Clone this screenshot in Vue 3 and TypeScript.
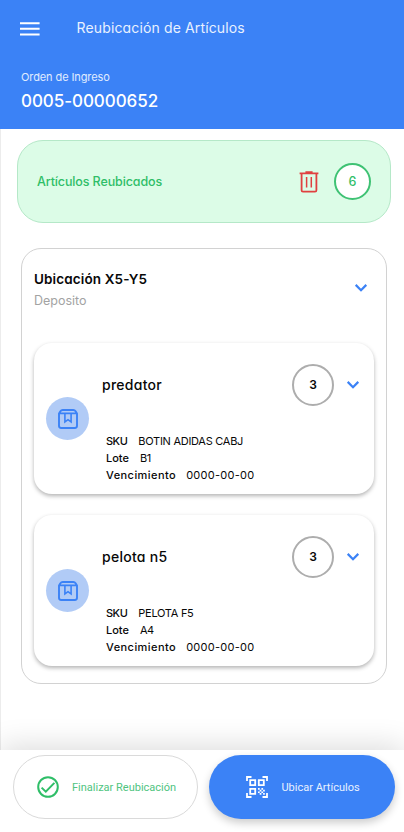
<script setup lang="ts">
interface Item {
  name: string
  qty: number
  sku: string
  lote: string
  vencimiento: string
}

const items: Item[] = [
  { name: 'predator', qty: 3, sku: 'BOTIN ADIDAS CABJ', lote: 'B1', vencimiento: '0000-00-00' },
  { name: 'pelota n5', qty: 3, sku: 'PELOTA F5', lote: 'A4', vencimiento: '0000-00-00' },
]
</script>

<template>
  <div class="screen">
    <header class="top">
      <div class="bar">
        <svg class="menu" viewBox="0 0 20 14"><path d="M0 1.2h19.6M0 6.8h19.6M0 12.4h19.6" /></svg>
        <h1 class="title">Reubicación de Artículos</h1>
      </div>
      <p class="order-label">Orden de Ingreso</p>
      <p class="order-number">0005-00000652</p>
    </header>

    <main class="content">
      <section class="moved">
        <span class="moved-label">Artículos Reubicados</span>
        <svg class="trash" viewBox="0 0 20 22">
          <path d="M.6 2.4h18.8M6.4 1.2h7.2M2.6 2.4v16.8q0 1.4 1.4 1.4h12q1.4 0 1.4-1.4V2.400" />
          <path class="thin" d="M7.600 6v10.600M12.300 6v10.600" />
        </svg>
        <span class="moved-count">6</span>
      </section>

      <section class="location">
        <div class="location-head">
          <div>
            <h2 class="location-name">Ubicación X5-Y5</h2>
            <p class="location-kind">Deposito</p>
          </div>
          <svg class="chevron" viewBox="0 0 14 10"><path d="M1.7 1.9 7 7.2l5.3-5.3" /></svg>
        </div>

        <article v-for="item in items" :key="item.name" class="card">
          <div class="badge">
            <svg viewBox="0 0 20 20">
              <path d="M1 4.400v12.400Q1 19 3.200 19h13.600q2.200 0 2.200-2.200V4.400l-1.400-2.200Q16.800 1 15.300 1H4.700Q3.200 1 2.400 2.200ZM1 4.400h18" />
              <path class="thin" d="M6.900 4.400v8.600l3.100-2.300 3.100 2.300V4.400" />
            </svg>
          </div>
          <div class="body">
            <div class="row">
              <h3 class="name">{{ item.name }}</h3>
              <span class="qty">{{ item.qty }}</span>
              <svg class="chevron" viewBox="0 0 14 10"><path d="M1.7 1.9 7 7.2l5.3-5.3" /></svg>
            </div>
            <dl class="details">
              <div class="sku"><dt>SKU</dt><dd>{{ item.sku }}</dd></div>
              <div class="lote"><dt>Lote</dt><dd>{{ item.lote }}</dd></div>
              <div class="expiry"><dt>Vencimiento</dt><dd>{{ item.vencimiento }}</dd></div>
            </dl>
          </div>
        </article>
      </section>
    </main>

    <footer class="actions">
      <button class="btn finish" type="button">
        <svg viewBox="0 0 22 22"><circle cx="11" cy="11" r="9.8" /><path d="m4.600 11.600 4.200 4.100 8.600-8.800" /></svg>
        <span>Finalizar Reubicación</span>
      </button>
      <button class="btn place" type="button">
        <svg viewBox="0 0 22 22">
          <path class="line" d="M1 5V1h4.500M16.500 1H21v4M21 17v4h-4.500M5.500 21H1v-4M4.200 4.200h5v5h-5zM12.800 4.200h5v5h-5zM4.200 12.800h5v5h-5z" />
          <path class="dots" d="M12 12h1.700v1.700H12zM15.400 12h1.700v1.700h-1.700zM13.700 13.700h1.700v1.700h-1.700zM17.100 13.700h1.700v1.700h-1.700zM12 15.400h1.700v1.700H12zM15.400 15.400h1.700v1.700h-1.700zM13.700 17.100h1.700v1.700h-1.700zM17.100 17.100h1.700v1.700h-1.700z" />
        </svg>
        <span>Ubicar Artículos</span>
      </button>
    </footer>
  </div>
</template>

<style>
body { background: #fff; }
</style>

<style scoped>
* { box-sizing: border-box; margin: 0; padding: 0; }
.screen {
  width: 404px; height: 832px; display: flex; flex-direction: column; overflow: hidden;
  background: #fff; color: #080808; box-shadow: inset 1px 0 #ececec;
  font-family: Inter, "Liberation Sans", sans-serif; font-feature-settings: "cv11";
}
svg { display: block; flex: none; fill: none; }
.top { flex: none; height: 129px; padding: 14px 21px 0; background: #3b82f6; color: #fff; }
.bar { display: flex; align-items: center; height: 28px; }
.menu { width: 20px; height: 14px; margin: 1px 36.5px 0 -1px; stroke: #fff; stroke-width: 2; }
.title { font-size: 14px; line-height: 18px; font-weight: 400; letter-spacing: .14px; color: #e8f1ff; margin-bottom: 1px; }
.order-label { margin-top: 26px; font-size: 11px; line-height: 18px; letter-spacing: -.1px; color: #e0ecff; }
.order-number { margin-top: 3px; font-size: 17px; line-height: 24px; font-weight: 500; letter-spacing: -.06px; }
.content { flex: 1; min-height: 0; padding: 11px 13px 0 17px; }
.moved {
  display: flex; align-items: center; height: 83px; padding: 0 19px;
  border: 1px solid #b5e8c8; border-radius: 26px; background: #dcfce7;
}
.moved-label { flex: 1; font-size: 12.5px; font-weight: 500; letter-spacing: -.12px; color: #2fbe68; }
.trash { width: 20px; height: 22px; margin-right: 15px; stroke: #e04040; stroke-width: 1.8; }
.trash .thin { stroke-width: 1.500; }
.moved-count {
  display: grid; place-items: center; width: 37px; height: 37px;
  border: 2px solid #3fc274; border-radius: 50%; background: #fff;
  color: #2fbe68; font-size: 12.500px; font-weight: 500;
}
.location {
  height: 436px; margin: 25px 4px 0; padding: 0 12px;
  border: 1px solid #d2d2d2; border-radius: 20px;
}
.location-head { display: flex; justify-content: space-between; height: 94px; padding-top: 19px; }
.location-name { font-size: 13.500px; line-height: 22px; font-weight: 600; letter-spacing: .13px; }
.location-kind { font-size: 12.500px; line-height: 22px; color: #a3a3a3; }
.chevron { width: 14px; height: 10px; stroke: #3b82f6; stroke-width: 2.200; }
.location-head .chevron { margin: 15px 6px 0 0; }
.card {
  display: flex; align-items: center; height: 151px; margin-bottom: 21px; padding: 0 14px 0 12px;
  border-radius: 18px; background: #fff; box-shadow: 0 2px 4px rgba(0, 0, 0, .3);
}
.badge { display: grid; place-items: center; flex: none; width: 43px; height: 43px; border-radius: 50%; background: #b1cbf6; }
.badge svg { width: 20px; height: 20px; stroke: #3b82f6; stroke-width: 1.900; stroke-linejoin: round; }
.badge .thin { stroke-width: 1.600; stroke-linejoin: miter; }
.body { flex: 1; align-self: stretch; padding: 20px 0 0 13px; }
.row { display: flex; align-items: center; height: 43px; }
.name { flex: 1; font-size: 14px; font-weight: 500; letter-spacing: .27px; }
.qty {
  display: grid; place-items: center; width: 42px; height: 42px; margin-right: 12px;
  border: 2px solid #adadad; border-radius: 50%; font-size: 12px; font-weight: 600;
}
.details { padding: 27px 0 0 4px; font-size: 11px; }
.details div { display: flex; height: 17px; line-height: 17px; }
.details dt { font-weight: 500; margin-right: 11px; }
.sku dt { letter-spacing: -.5px; }
.sku dd { letter-spacing: -.27px; }
.lote dd { letter-spacing: -.5px; }
.expiry dt { letter-spacing: .44px; margin-right: 10px; }
.expiry dd { letter-spacing: .26px; }
.actions {
  flex: none; display: flex; gap: 11px; height: 82px; padding: 5px 9px 0 13px; background: #fff;
  box-shadow: 0 -4px 30px rgba(0, 0, 0, .14);
}
.btn {
  display: flex; align-items: center; height: 64px; width: 186px; border-radius: 32px;
  font: 11px Roboto, sans-serif;
}
.btn svg { width: 22px; height: 22px; margin-right: 13px; }
.finish { padding-left: 23px; border: 1px solid #dadada; background: #fff; color: #4fc47f; }
.finish svg { stroke: #2fbe68; stroke-width: 2; }
.place { padding-left: 37px; border: 0; background: #3b82f6; color: #e8f1ff; box-shadow: 0 4px 8px rgba(0, 0, 0, .2); }
.place .line { stroke: #fff; stroke-width: 1.800; }
.place .dots { fill: #fff; }
</style>
